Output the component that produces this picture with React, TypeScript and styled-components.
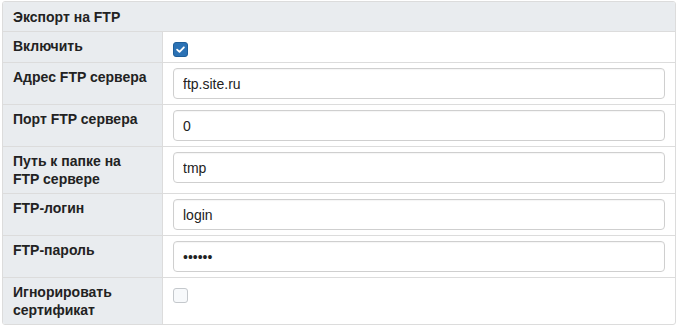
import React from "react";
import styled, { createGlobalStyle } from "styled-components";

const GlobalStyle = createGlobalStyle`
  html, body { margin: 0; padding: 0; background: #fff; }
  body { font-family: "Liberation Sans", Arial, sans-serif; font-size: 14px; color: #333; }
  * { box-sizing: border-box; }
`;

const Page = styled.div`
  padding: 1px 3px 0 2px;
`;

const Panel = styled.div`
  border: 1px solid #dcdcdc;
  border-radius: 3px;
  overflow: hidden;
  width: 674px;
`;

const Header = styled.div`
  background: #e9ecef;
  padding: 5px 10px 4px;
  line-height: 20px;
  font-weight: bold;
  color: #222;
`;

const Row = styled.div`
  display: grid;
  grid-template-columns: 160px 1fr;
  border-top: 1px solid #dcdcdc;
`;

const Label = styled.div`
  background: #e9ecef;
  border-right: 1px solid #dcdcdc;
  padding: 5px 14px 5px 10px;
  line-height: 18px;
  font-weight: bold;
  color: #222;
`;

const Value = styled.div`
  padding: 5px 10px;
  min-height: 30px;
`;

const Input = styled.input`
  display: block;
  width: 100%;
  height: 31px;
  padding: 0 9px;
  border: 1px solid #cfcfcf;
  border-radius: 4px;
  font-family: "Liberation Sans", Arial, sans-serif;
  font-size: 14px;
  color: #222;
  background: #fff;
  outline: none;
  box-shadow: inset 0 1px 1px rgba(0, 0, 0, 0.04);
`;

const CheckWrap = styled.div`
  height: 20px;
  padding-top: 5px;
`;

const Box = styled.span<{ $checked?: boolean }>`
  display: flex;
  align-items: center;
  justify-content: center;
  width: 15px;
  height: 15px;
  border-radius: 3px;
  border: 1px solid ${(p) => (p.$checked ? "#1f5f9a" : "#c4c8cc")};
  background: ${(p) => (p.$checked ? "#2b72b5" : "#f7f9fb")};
`;

const Check = ({ checked }: { checked?: boolean }) => (
  <CheckWrap>
    <Box $checked={checked}>
      {checked && (
        <svg width="11" height="11" viewBox="0 0 12 12">
          <path d="M2.3 6.2 L4.9 8.6 L9.7 3.6" fill="none" stroke="#fff" strokeWidth="2" strokeLinecap="round" strokeLinejoin="round" />
        </svg>
      )}
    </Box>
  </CheckWrap>
);

export default function App() {
  return (
    <Page>
      <GlobalStyle />
      <Panel>
        <Header>Экспорт на FTP</Header>
        <Row>
          <Label>Включить</Label>
          <Value><Check checked /></Value>
        </Row>
        <Row>
          <Label>Адрес FTP сервера</Label>
          <Value><Input defaultValue="ftp.site.ru" /></Value>
        </Row>
        <Row>
          <Label>Порт FTP сервера</Label>
          <Value><Input defaultValue="0" /></Value>
        </Row>
        <Row>
          <Label>Путь к папке на FTP сервере</Label>
          <Value><Input defaultValue="tmp" /></Value>
        </Row>
        <Row>
          <Label>FTP-логин</Label>
          <Value><Input defaultValue="login" /></Value>
        </Row>
        <Row>
          <Label>FTP-пароль</Label>
          <Value><Input type="password" defaultValue="secret" /></Value>
        </Row>
        <Row>
          <Label>Игнорировать сертификат</Label>
          <Value><Check /></Value>
        </Row>
      </Panel>
    </Page>
  );
}
